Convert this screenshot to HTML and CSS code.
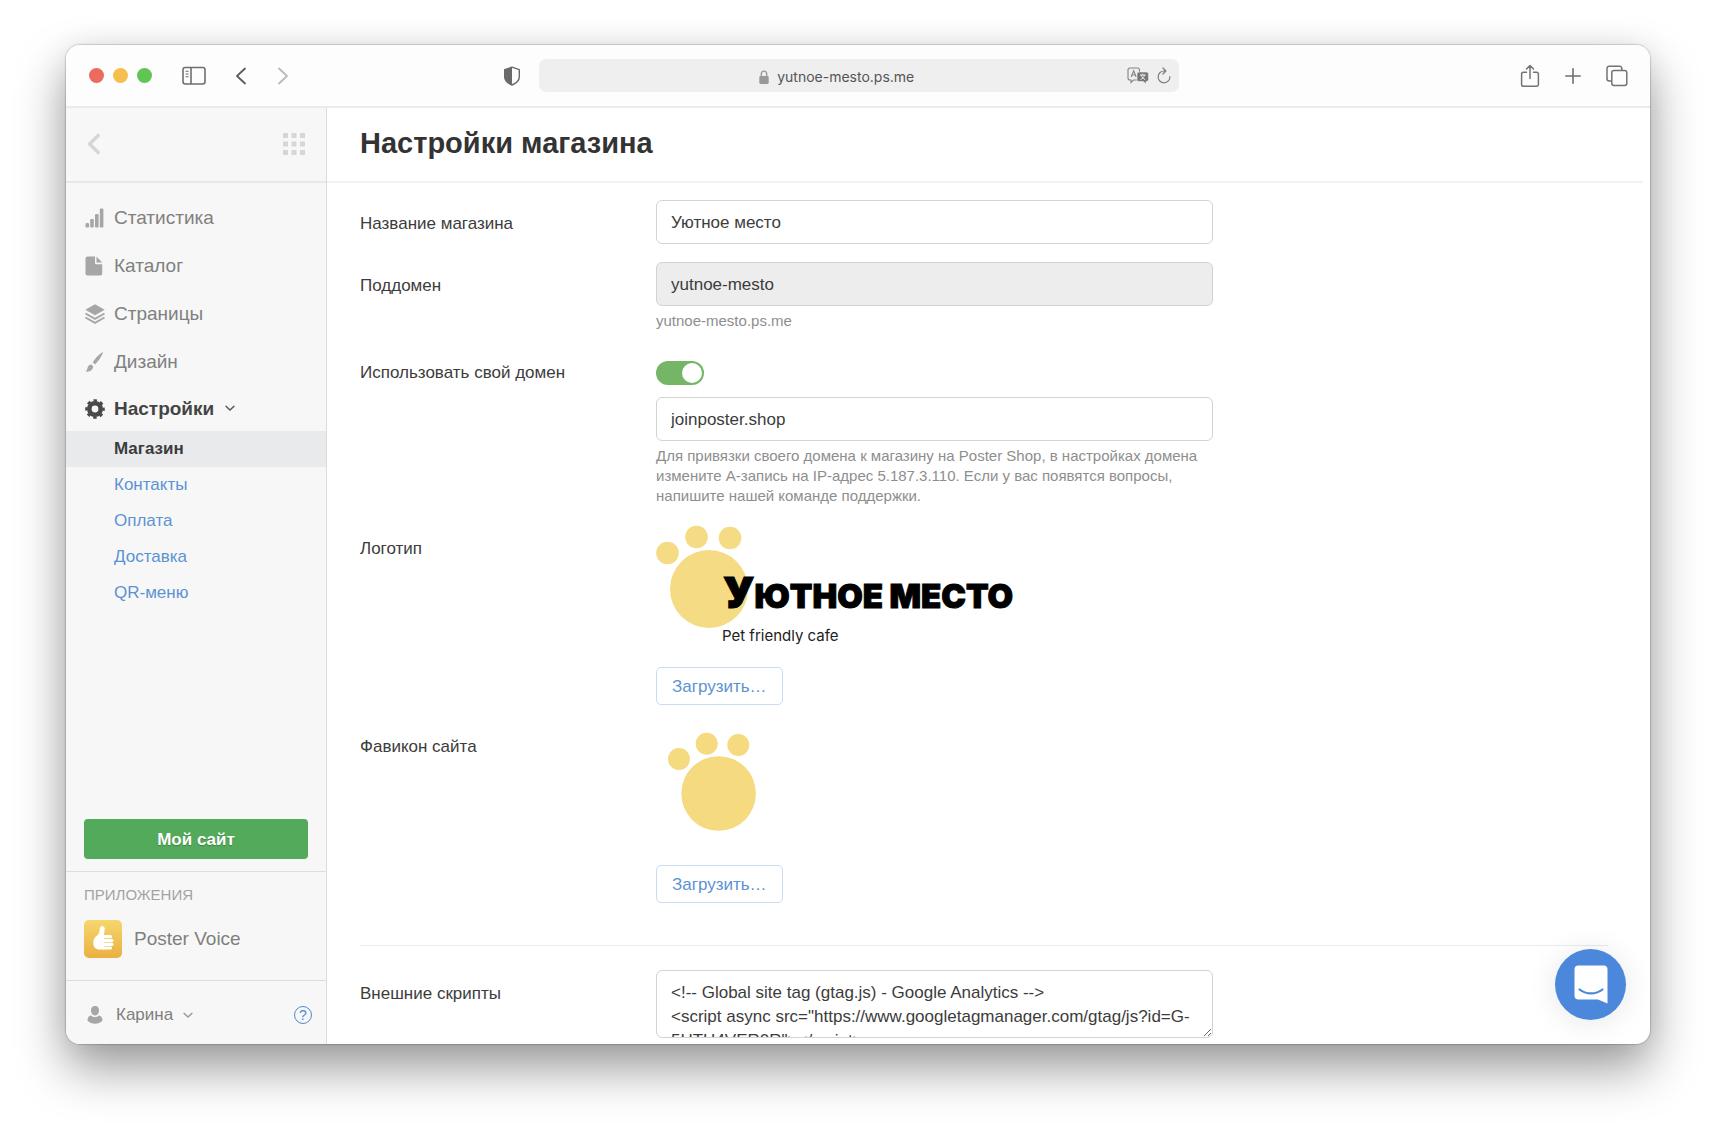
FILE: index.html
```html
<!DOCTYPE html>
<html lang="ru">
<head>
<meta charset="utf-8">
<meta name="viewport" content="width=device-width, initial-scale=1">
<title>Настройки магазина</title>
<link rel="stylesheet" href="styles.css">
</head>
<body>
<div class="window">
  <header class="toolbar">
    <div class="toolbar-left">
      <div class="lights"><span class="light red"></span><span class="light yellow"></span><span class="light green"></span></div>
      <button class="tool" type="button" aria-label="Боковая панель"><svg width="24" height="20" viewBox="0 0 24 20" fill="none" stroke="#6e6e6e" stroke-width="1.6"><rect x="1" y="1.5" width="22" height="16.5" rx="2.2"/><path d="M9 1.5V18"/><path d="M3.6 5.2h3M3.6 8h3M3.6 10.800h3" stroke-width="1.1"/></svg></button>
      <button class="tool tool-back" type="button" aria-label="Назад"><svg width="12" height="18" viewBox="0 0 12 18" fill="none" stroke="#5c5c5c" stroke-width="1.8" stroke-linecap="round" stroke-linejoin="round"><path d="M10 1.500 2 9l8 7.500"/></svg></button>
      <button class="tool tool-forward" type="button" aria-label="Вперёд"><svg width="12" height="18" viewBox="0 0 12 18" fill="none" stroke="#b9b9b9" stroke-width="1.8" stroke-linecap="round" stroke-linejoin="round"><path d="M2 1.500 10 9l-8 7.500"/></svg></button>
    </div>
    <div class="toolbar-center">
      <button class="tool" type="button" aria-label="Конфиденциальность"><svg width="18" height="20" viewBox="0 0 18 20"><path d="M9 1.200 16.300 3.700V11c0 4-3.500 6.400-7.300 8C5.200 17.400 1.700 15 1.700 11V3.700Z" fill="none" stroke="#6a6a6a" stroke-width="1.4" stroke-linejoin="round"/><path d="M9 1.200V19C5.200 17.400 1.700 15 1.700 11V3.700Z" fill="#6a6a6a"/></svg></button>
      <div class="address">
        <span class="address-text"><svg width="10" height="14" viewBox="0 0 10 14"><path d="M2.300 7V4a2.700 2.900 0 0 1 5.400 0v3" fill="none" stroke="#999" stroke-width="1.300"/><rect x="0.300" y="6" width="9.400" height="8" rx="1.400" fill="#999"/></svg>yutnoe-mesto.ps.me</span>
        <span class="address-tools">
          <button class="tool" type="button" aria-label="Перевести"><svg width="22" height="18" viewBox="0 0 22 18"><path d="M3 1h7.500a2 2 0 0 1 2 2v8a2 2 0 0 1-2 2H6.500L4 15.500V13H3a2 2 0 0 1-2-2V3a2 2 0 0 1 2-2Z" fill="none" stroke="#858585" stroke-width="1.100"/><path d="M4.200 10 6.700 3.800 9.200 10M5.100 8h3.200" fill="none" stroke="#858585" stroke-width="1.100"/><path d="M12 5h7.500a2 2 0 0 1 2 2v5.500a2 2 0 0 1-2 2H19V17l-2.600-2.500H12a2 2 0 0 1-2-2V7a2 2 0 0 1 2-2Z" fill="#777" stroke="#efefef" stroke-width=".6"/><path d="M13 8h5.600M15.800 6.700V8M17.500 8c-.5 2-2 3.600-4 4.600M14.200 8c.5 2 2 3.600 4 4.600" stroke="#efefef" fill="none"/></svg></button>
          <button class="tool" type="button" aria-label="Обновить"><svg width="14" height="18" viewBox="0 0 14 18" fill="none" stroke="#7c7c7c" stroke-width="1.200" stroke-linecap="round" stroke-linejoin="round"><path d="M7.500 4A5.900 5.900 0 1 0 12.900 9.500M6 1l2.900 3L5.900 7"/></svg></button>
        </span>
      </div>
    </div>
    <div class="toolbar-right">
      <button class="tool" type="button" aria-label="Поделиться"><svg width="20" height="24" viewBox="0 0 20 24" fill="none" stroke="#737373" stroke-width="1.500" stroke-linecap="round" stroke-linejoin="round"><path d="M6.500 8.200H3.400a1.800 1.800 0 0 0-1.800 1.800v10.500a1.800 1.800 0 0 0 1.800 1.800h13.200a1.800 1.800 0 0 0 1.800-1.800V10a1.800 1.800 0 0 0-1.800-1.800H13.500M10 14.500V1.500M6.500 5 10 1.500 13.500 5"/></svg></button>
      <button class="tool" type="button" aria-label="Новая вкладка"><svg width="16" height="16" viewBox="0 0 16 16" stroke="#6e6e6e" stroke-width="1.600" stroke-linecap="round"><path d="M8 .8v14.400M.8 8h14.400"/></svg></button>
      <button class="tool" type="button" aria-label="Все вкладки"><svg width="22" height="22" viewBox="0 0 22 22" fill="none" stroke="#737373" stroke-width="1.500"><path d="M5.500 16H3.200A2.200 2.200 0 0 1 1 13.800V3.400a2.200 2.200 0 0 1 2.200-2.200H13.600a2.200 2.200 0 0 1 2.200 2.200v1.900"/><rect x="5.800" y="5.500" width="15" height="15" rx="2.200"/></svg></button>
    </div>
  </header>

  <div class="app">
    <aside class="sidebar">
      <div class="sidebar-head">
        <button class="tool" type="button" aria-label="Свернуть"><svg width="14" height="22" viewBox="0 0 14 22" fill="none" stroke="#d6d6d6" stroke-width="3.400"><path d="M12.200 1.500 2.600 11l9.600 9.500"/></svg></button>
        <button class="tool" type="button" aria-label="Приложения"><svg width="22" height="22" viewBox="0 0 22 22" fill="#d6d6d6"><path d="M0 0h5v5H0zM8.500 0h5v5h-5zM17 0h5v5h-5zM0 8.500h5v5H0zM8.500 8.500h5v5h-5zM17 8.500h5v5h-5zM0 17h5v5H0zM8.500 17h5v5h-5zM17 17h5v5h-5z"/></svg></button>
      </div>
      <nav class="nav">
        <a class="nav-item" href="#"><svg width="20" height="20" viewBox="0 0 20 20" fill="#a6a6a6"><rect x="0.500" y="15" width="3.600" height="4.500" rx="1.200"/><rect x="5.200" y="11" width="3.600" height="8.500" rx="1.200"/><rect x="10" y="6" width="3.600" height="13.500" rx="1.200"/><rect x="14.800" y="0.500" width="3.600" height="19" rx="1.200"/></svg>Статистика</a>
        <a class="nav-item" href="#"><svg width="20" height="20" viewBox="0 0 20 20" fill="#a6a6a6"><path d="M2.500.5H10V7a1.200 1.200 0 0 0 1.200 1.200h6V17.500a2 2 0 0 1-2 2H2.500a2 2 0 0 1-2-2v-15a2 2 0 0 1 2-2ZM11.500.5l5.700 6h-5.700Z"/></svg>Каталог</a>
        <a class="nav-item" href="#"><svg width="20" height="20" viewBox="0 0 20 20" fill="#a6a6a6"><path d="M10 .3 19.700 5.800 10 11.300.3 5.800Z"/><path d="M.5 9.500 10 14.800l9.500-5.300M.5 13.500 10 18.800l9.500-5.300" fill="none" stroke="#a6a6a6" stroke-width="1.900"/></svg>Страницы</a>
        <a class="nav-item" href="#"><svg width="20" height="20" viewBox="0 0 20 20" fill="#a6a6a6"><path d="M17.200.2c.7 0 .8.700.5 1.300-2 4.200-4.600 8-7.700 11L7.700 10.200C10.300 6.300 13.400 2.900 17.200.2Z"/><path d="M6.400 12.600 8.300 14.500C7.500 18.500 5 20 .6 19.600c1.200-.9 1.500-2 1.900-3.600.5-2 2-3.200 3.900-3.400Z"/></svg>Дизайн</a>
        <a class="nav-item nav-current" href="#"><svg width="20" height="20" viewBox="0 0 20 20"><circle cx="10" cy="10" r="5.700" fill="none" stroke="#4a4a4a" stroke-width="4.600"/><circle cx="10" cy="10" r="8.600" fill="none" stroke="#4a4a4a" stroke-width="2.400" stroke-dasharray="3.400 3.354" stroke-dashoffset="1.700"/></svg>Настройки<svg class="caret" width="12" height="7" viewBox="-2 0 12 7" fill="none" stroke="#555" stroke-width="1.400" stroke-linecap="round"><path d="M1 1.200 5 5l4-3.800"/></svg></a>
      </nav>
      <nav class="subnav">
        <a class="sub-item sub-current" href="#">Магазин</a>
        <a class="sub-item" href="#">Контакты</a>
        <a class="sub-item" href="#">Оплата</a>
        <a class="sub-item" href="#">Доставка</a>
        <a class="sub-item" href="#">QR-меню</a>
      </nav>
      <div class="site"><button class="site-button" type="button">Мой сайт</button></div>
      <section class="apps">
        <h2 class="apps-title">ПРИЛОЖЕНИЯ</h2>
        <a class="app-link" href="#"><svg width="38" height="38" viewBox="0 0 38 38"><defs><linearGradient id="gold" x1="0" y1="0" x2="0" y2="1"><stop offset="0" stop-color="#f5d76e"/><stop offset="1" stop-color="#ebb040"/></linearGradient></defs><rect width="38" height="38" rx="5" fill="url(#gold)"/><g fill="#fff"><path d="M15.800 8.500c.2-1.800 1-2.600 2.400-2.600 1.800 0 2.700 1.200 2.500 3.300l-.7 5.300v15H16c-4.500 0-6.700-2.300-6.700-6.500 0-4 1.600-6 4.600-8.200 1.400-1.200 1.600-3.500 1.900-6.300Z"/><rect x="18.500" y="15" width="9.500" height="3.300" rx="1.600"/><rect x="18.500" y="18.900" width="11" height="3.300" rx="1.600"/><rect x="18.500" y="22.800" width="11" height="3.200" rx="1.600"/><rect x="18.500" y="26.600" width="9.500" height="3" rx="1.500"/></g></svg>Poster Voice</a>
      </section>
      <footer class="user">
        <button class="user-button" type="button"><svg width="16" height="18" viewBox="0 0 16 18" fill="#a6a6a6"><path d="M8 0c2.600 0 4 1.800 4 4.300C12 7.200 10.400 9.500 8 9.500S4 7.200 4 4.300C4 1.800 5.400 0 8 0Z"/><path d="M4.200 9.600c1 1 2.300 1.500 3.800 1.500s2.800-.5 3.800-1.500c2.600.5 3.700 2 3.700 5C13.500 17 11 17.800 8 17.800S2.500 17 .5 14.600c0-3 1.100-4.500 3.700-5Z"/></svg>Карина<svg class="caret" width="10" height="7" viewBox="0 0 10 7" fill="none" stroke="#999" stroke-width="1.400" stroke-linecap="round"><path d="M1 1.200 5 5l4-3.800"/></svg></button>
        <a class="help" href="#" aria-label="Помощь">?</a>
      </footer>
    </aside>

    <main class="main">
      <div class="main-head"><h1 class="title">Настройки магазина</h1></div>
      <form class="form">
        <div class="row">
          <label class="label" for="name">Название магазина</label>
          <div class="field"><input class="input" id="name" type="text" value="Уютное место"></div>
        </div>
        <div class="row">
          <label class="label" for="sub">Поддомен</label>
          <div class="field"><input class="input input-locked" id="sub" type="text" value="yutnoe-mesto" readonly><p class="hint">yutnoe-mesto.ps.me</p></div>
        </div>
        <div class="row row-domain">
          <label class="label" for="own">Использовать свой домен</label>
          <div class="field">
            <input class="toggle" id="own" type="checkbox" checked>
            <input class="input" type="text" aria-label="Домен" value="joinposter.shop">
            <p class="hint">Для привязки своего домена к магазину на Poster Shop, в настройках домена измените А-запись на IP-адрес 5.187.3.110. Если у вас появятся вопросы, напишите нашей команде поддержки.</p>
          </div>
        </div>
        <div class="row">
          <label class="label" for="logo">Логотип</label>
          <div class="field">
            <svg class="picture" width="368" height="124" viewBox="0 0 368 124" role="img" aria-label="Уютное место"><g fill="#f5db83"><circle cx="11.500" cy="28" r="11.300"/><circle cx="40.500" cy="12" r="11.300"/><circle cx="74" cy="13" r="11.300"/><circle cx="53" cy="64" r="39"/></g><text class="logo-name" x="67" y="83"><tspan class="logo-cap">У</tspan>ЮТНОЕ МЕСТО</text><text class="logo-tag" x="66" y="116">Pet friendly cafe</text></svg>
            <button class="upload" id="logo" type="button">Загрузить…</button>
          </div>
        </div>
        <div class="row">
          <label class="label" for="favicon">Фавикон сайта</label>
          <div class="field">
            <svg class="picture" width="124" height="124" viewBox="0 -10 124 124" role="img" aria-label="Фавикон"><g fill="#f5da7f"><circle cx="23" cy="26" r="11"/><circle cx="50.700" cy="10.800" r="11"/><circle cx="82.300" cy="12" r="11"/><circle cx="62.600" cy="60.500" r="37.300"/></g></svg>
            <button class="upload" id="favicon" type="button">Загрузить…</button>
          </div>
        </div>
        <hr class="divider">
        <div class="row">
          <label class="label" for="scripts">Внешние скрипты</label>
          <div class="field"><textarea class="input textarea" id="scripts" spellcheck="false">&lt;!-- Global site tag (gtag.js) - Google Analytics --&gt;
&lt;script async src="https://www.googletagmanager.com/gtag/js?id=G-5HTH4VER0R"&gt;&lt;/script&gt;</textarea></div>
        </div>
      </form>
    </main>
    <button class="chat" type="button" aria-label="Чат"><svg width="34" height="39" viewBox="0 0 34 39"><path d="M4.500.5h25a4 4 0 0 1 4 4V38.500L24 34.500H4.500a4 4 0 0 1-4-4v-26a4 4 0 0 1 4-4Z" fill="#fff"/><path d="M5.500 24.500c6.500 5.200 16.500 5.200 23 0" fill="none" stroke="#4b88db" stroke-width="2.200" stroke-linecap="round"/></svg></button>
  </div>
</div>
</body>
</html>
```
FILE: styles.css
```css
* { box-sizing: border-box; }

body {
  margin: 0;
  height: 100vh;
  padding: 45px 66px 88px;
  background: #fff;
  color: #3c3c3c;
  font: 16px/24px "Liberation Sans", Arial, sans-serif;
  overflow: hidden;
}

button { font: inherit; border: 0; background: none; padding: 0; color: inherit; }
a { text-decoration: none; color: inherit; }
svg { display: block; flex: none; }

.window {
  height: 100%;
  display: flex;
  flex-direction: column;
  border-radius: 14px;
  overflow: hidden;
  background: #fff;
  box-shadow: 0 0 1px 1px rgba(0, 0, 0, .16), 0 24px 50px rgba(0, 0, 0, .4), 0 0 30px rgba(0, 0, 0, .06);
}

/* Browser toolbar */
.toolbar {
  flex: none;
  height: 63px;
  padding: 0 22px 0 23px;
  display: grid;
  grid-template-columns: 12fr 676px 13fr;
  align-items: center;
  background: #fdfdfd;
  border-bottom: 2px solid #ebebeb;
}
.tool { display: flex; }
.toolbar-left, .toolbar-right { display: flex; align-items: center; }
.toolbar-right { justify-content: flex-end; gap: 25px; }
.lights { display: flex; gap: 9px; margin-right: 30px; }
.light { width: 15px; height: 15px; border-radius: 50%; }
.red { background: #ed6a5e; }
.yellow { background: #f5bf4f; }
.green { background: #61c554; }
.tool-back { margin: 0 30px 0 29px; }
.toolbar-center { display: flex; align-items: center; gap: 18px; }
.address {
  flex: 1;
  height: 33px;
  padding: 0 8px 0 7px;
  display: flex;
  align-items: center;
  border-radius: 7px;
  background: #efefef;
  color: #555;
  font: 14px/20px Inter, sans-serif;
}
.address-text { flex: 1; padding-top: 2px; display: flex; justify-content: center; align-items: center; gap: 8px; }
.address-tools { display: flex; align-items: center; gap: 8px; }

/* Layout */
.app { flex: 1; min-height: 0; display: flex; position: relative; }

/* Sidebar */
.sidebar {
  flex: none;
  width: 261px;
  display: flex;
  flex-direction: column;
  background: #f7f7f7;
  border-right: 1px solid #dcdcdc;
  color: #808080;
}
.sidebar-head {
  height: 75px;
  padding: 0 21px 2px;
  display: flex;
  align-items: center;
  justify-content: space-between;
  border-bottom: 2px solid #e8e8e8;
}
.nav { padding-top: 11px; }
.nav-item {
  height: 48px;
  padding: 0 19px;
  display: flex;
  align-items: center;
  gap: 9px;
  font-size: 19px;
}
.nav-current { height: 45px; color: #444; font-weight: bold; }
.sub-item {
  display: block;
  height: 36px;
  padding-left: 48px;
  font-size: 17px;
  line-height: 36px;
  color: #5c93d3;
}
.sub-current { background: #e9eaec; color: #3c3c3c; font-weight: bold; }
.site { margin-top: auto; padding: 0 18px 12px; }
.site-button {
  width: 100%;
  height: 40px;
  padding-top: 2px;
  border-radius: 4px;
  background: #52aa5a;
  color: #fff;
  font-size: 17px;
  font-weight: bold;
  text-shadow: 0 1px 1px rgba(0, 0, 0, .25);
}
.apps { height: 109px; padding: 11px 18px 0; border-top: 1px solid #dedede; }
.apps-title { margin: 0 0 13px; font-size: 15px; line-height: 24px; font-weight: normal; color: #a3a3a3; }
.app-link { display: flex; align-items: center; gap: 12px; font-size: 19px; }
.user {
  height: 64px;
  padding: 5px 14px 0 21px;
  display: flex;
  align-items: center;
  justify-content: space-between;
  border-top: 1px solid #dedede;
}
.user-button { display: flex; align-items: center; gap: 13px; font-size: 17px; }
.user-button .caret { margin-left: -3px; }
.help {
  width: 18px;
  height: 18px;
  border: 1px solid #4f8ad2;
  border-radius: 50%;
  color: #4f8ad2;
  font-size: 14px;
  line-height: 16px;
  text-align: center;
}

/* Settings form */
.main { flex: 1; min-width: 0; overflow: hidden; }
.main-head {
  height: 75px;
  margin-right: 7px;
  padding: 0 33px 3px;
  display: flex;
  align-items: center;
  border-bottom: 2px solid #f2f2f2;
}
.title { margin: 0; font-size: 29px; line-height: 36px; color: #333; }
.form { padding: 17px 42px 0 33px; }
.row { display: grid; grid-template-columns: 296px 557px; margin-bottom: 18px; }
.label { padding-top: 12px; font-size: 17px; line-height: 24px; }
.row-domain { margin: 30px 0 19px; }
.row-domain .label { padding-top: 0; }
.field { display: flex; flex-direction: column; align-items: flex-start; }
.input {
  width: 100%;
  height: 44px;
  padding: 2px 14px 0;
  border: 1px solid #d3d3d3;
  border-radius: 6px;
  background: #fff;
  color: #3c3c3c;
  font: 17px/24px "Liberation Sans", Arial, sans-serif;
}
.input-locked { background: #ededed; }
.hint { margin: 5px 0 0; font-size: 15px; line-height: 20px; color: #8e8e8e; }
.toggle {
  appearance: none;
  width: 48px;
  height: 24px;
  margin: 0 0 12px;
  padding: 2px;
  display: flex;
  justify-content: flex-end;
  border-radius: 12px;
  background: #75b666;
}
.toggle::before { content: ""; width: 20px; height: 20px; border-radius: 50%; background: #fff; }
.picture { margin-bottom: 18px; }
.logo-name { font: 900 33px Inter, "Noto Sans", sans-serif; fill: #000; stroke: #000; stroke-width: 1px; }
.logo-cap { font-size: 42px; }
.logo-tag { font: 15px Inter, sans-serif; fill: #222; }
.upload {
  height: 38px;
  padding: 1px 15px 0;
  border: 1px solid #c9dcf2;
  border-radius: 5px;
  background: #fff;
  color: #5c93d3;
  font-size: 17px;
}
.divider { margin: 42px 0 24px; border: 0; border-top: 1px solid #ebebeb; }
.textarea { height: 68px; padding: 10px 14px 0; overflow: hidden; resize: vertical; display: block; }

/* Chat launcher floats over the page */
.chat {
  position: absolute;
  right: 24px;
  bottom: 24px;
  width: 71px;
  height: 71px;
  display: flex;
  align-items: center;
  justify-content: center;
  border-radius: 50%;
  background: #4b88db;
  box-shadow: 0 2px 30px rgba(0, 0, 0, .1);
}
```
